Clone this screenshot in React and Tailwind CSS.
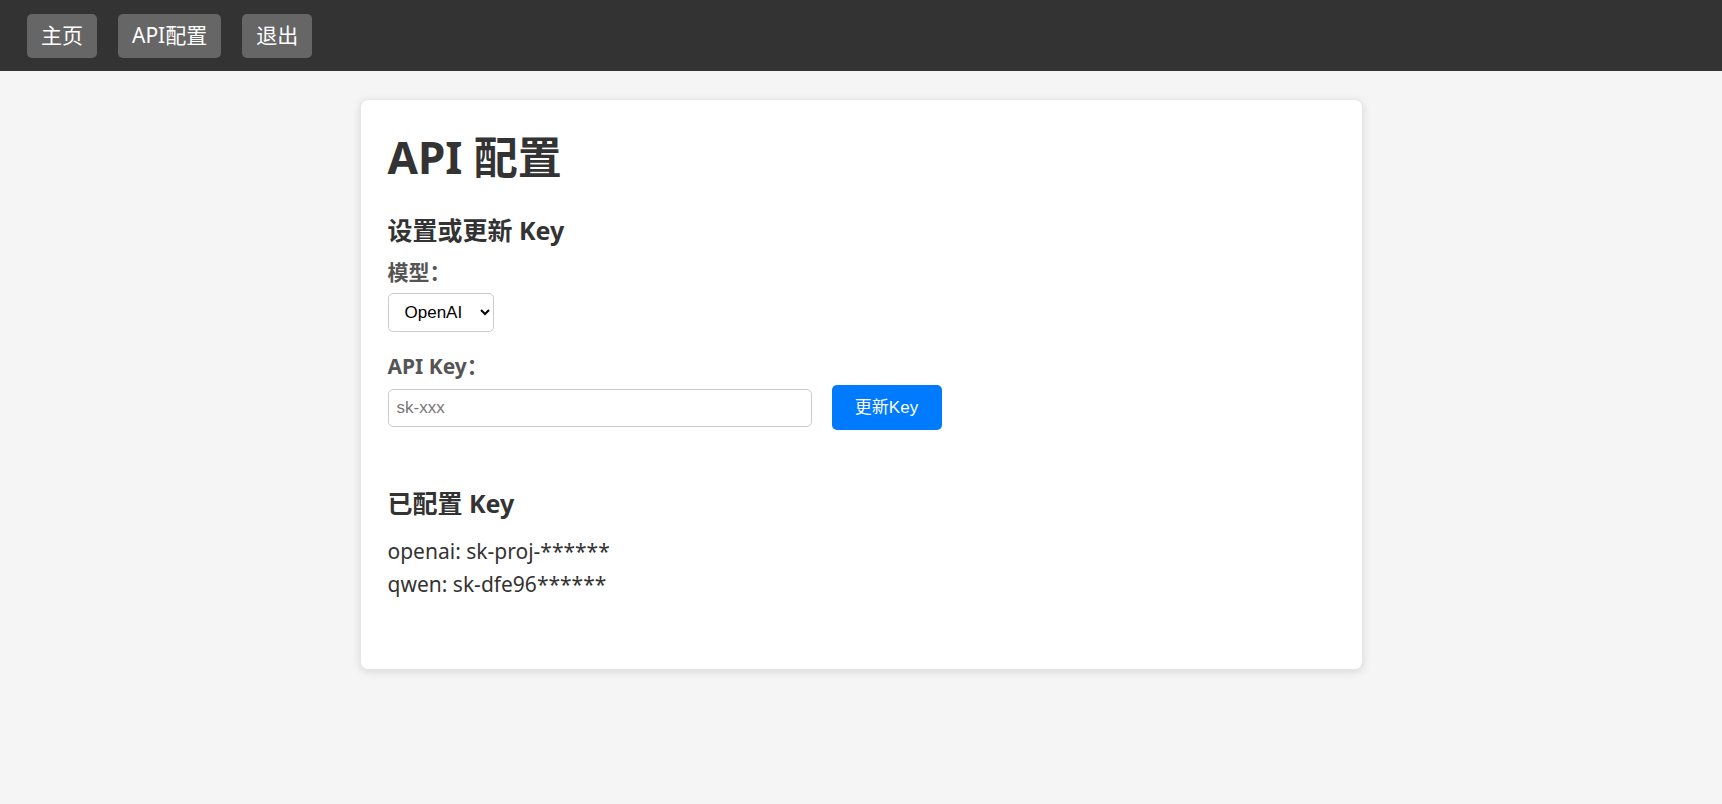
import React, { useState } from 'react'

const NAV_ITEMS = ['主页', 'API配置', '退出']
const KEYS = [
  { model: 'openai', masked: 'sk-proj-******' },
  { model: 'qwen', masked: 'sk-dfe96******' },
]

const App = () => {
  const [model, setModel] = useState('openai')
  const [apiKey, setApiKey] = useState('')

  return (
    <div className="min-h-screen bg-[#f5f5f5] text-[#333] font-['Noto_Sans','Noto_Sans_CJK_SC',sans-serif]">
      <nav className="h-[71px] bg-[#333] flex items-center gap-[21px] px-[27px]">
        {NAV_ITEMS.map((item) => (
          <button key={item} className="h-[44px] px-[14px] rounded-[5px] bg-[#666] text-white text-[21px] leading-none">
            {item}
          </button>
        ))}
      </nav>

      <main className="pt-[28px]">
        <div className="w-[1003px] mx-auto bg-white rounded-[8px] shadow-[0_2px_8px_rgba(0,0,0,0.12)] border border-[#e6e6e6] px-[27px] pt-[31px] pb-[68px]">
          <h1 className="text-[44px] leading-[52px] font-bold">API 配置</h1>

          <h3 className="mt-[31px] text-[25px] leading-[32px] font-bold">设置或更新 Key</h3>

          <label className="block mt-[12px] text-[21px] leading-[28px] font-bold text-[#555]">模型：</label>
          <select
            value={model}
            onChange={(e) => setModel(e.target.value)}
            className="mt-[7px] h-[39px] w-[106px] pl-[12px] pr-[6px] border border-[#ccc] rounded-[5px] bg-white text-[17px] font-['Liberation_Sans','Noto_Sans_CJK_SC',sans-serif] text-black"
          >
            <option value="openai">OpenAI</option>
            <option value="qwen">Qwen</option>
          </select>

          <label className="block mt-[20px] text-[21px] leading-[28px] font-bold text-[#555]">API Key：</label>
          <div className="mt-[5px] flex items-center gap-[20px]">
            <input
              value={apiKey}
              onChange={(e) => setApiKey(e.target.value)}
              placeholder="sk-xxx"
              className="w-[424px] h-[38px] px-[8px] border border-[#ccc] rounded-[5px] text-[17px] font-['Liberation_Sans','Noto_Sans_CJK_SC',sans-serif] placeholder:text-[#777] outline-none"
            />
            <button className="h-[45px] w-[110px] rounded-[5px] bg-[#007bff] text-white text-[17px] font-['Liberation_Sans','Noto_Sans_CJK_SC',sans-serif]">
              更新Key
            </button>
          </div>

          <h3 className="mt-[57px] text-[25px] leading-[32px] font-bold">已配置 Key</h3>
          <div className="mt-[16px] text-[21px] leading-[33px]">
            {KEYS.map((k) => (
              <p key={k.model}>{k.model}: {k.masked}</p>
            ))}
          </div>
        </div>
      </main>
    </div>
  )
}

export default App
